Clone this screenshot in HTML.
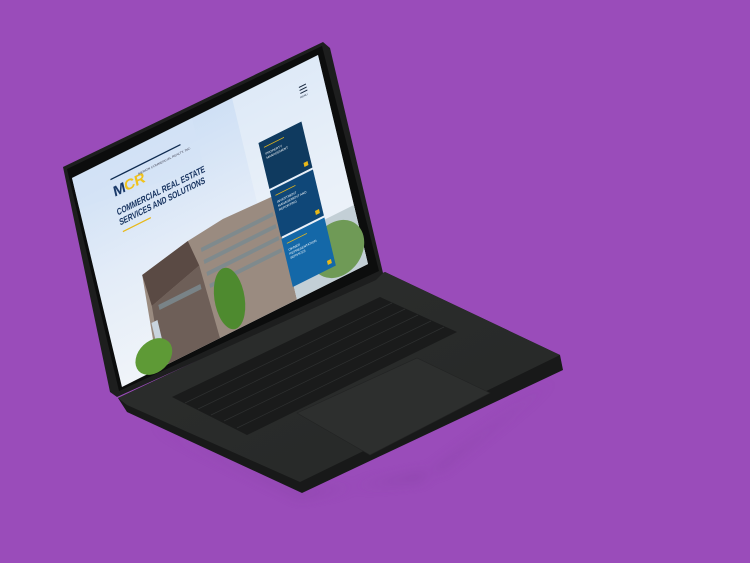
<!DOCTYPE html>
<html><head><meta charset="utf-8"><style>
html,body{margin:0;padding:0;background:#9a4cba;}
svg{display:block}
text{font-family:"Liberation Sans",sans-serif}
</style></head><body>
<svg width="750" height="563" viewBox="0 0 750 563">
<defs>
<linearGradient id="sky" x1="0" y1="0" x2="0" y2="1">
<stop offset="0" stop-color="#cfe0f5"/><stop offset="0.5" stop-color="#e3ecf8"/><stop offset="1" stop-color="#f0f4f9"/>
</linearGradient>
<linearGradient id="base" x1="0" y1="0" x2="1" y2="1">
<stop offset="0" stop-color="#2c2e2d"/><stop offset="1" stop-color="#262827"/>
</linearGradient>
<filter id="bl"><feGaussianBlur stdDeviation="6"/></filter>
</defs>
<rect width="750" height="563" fill="#9a4cba"/>
<!-- shadow -->
<polygon points="150,425 300,497 440,470 555,380 420,480 300,492" fill="#7a3a96" opacity="0.5" filter="url(#bl)"/>
<!-- base -->
<polygon points="118,398 385,272 560,355 563,370 302,493 127,412" fill="#181919"/>
<polygon points="118,398 385,272 560,355 300,482 127,405" fill="url(#base)"/>
<!-- keyboard -->
<polygon points="172,397 380,297 457,332 247,435" fill="#1a1b1b"/>
<g stroke="#2e3030" stroke-width="0.7">
<line x1="185" y1="403" x2="392" y2="303"/><line x1="198" y1="409" x2="405" y2="309"/><line x1="211" y1="415" x2="418" y2="315"/><line x1="224" y1="421" x2="431" y2="321"/><line x1="237" y1="428" x2="444" y2="327"/>
</g>
<!-- trackpad -->
<polygon points="297,413 417,358 490,393 370,455" fill="#2d2f2e" stroke="#232424" stroke-width="0.6"/>
<!-- lid -->
<polygon points="63,167 323,42 330,48 383,273 376,280 117,397 110,392" fill="#1d1e1e"/>
<polygon points="67,169 322,46 379,271 119,391" fill="#0c0d0d"/>
<!-- screen content -->
<g transform="matrix(1,-0.5,0.239,1,72,178)">
<rect x="0" y="0" width="246" height="209" fill="url(#sky)"/>
<polygon points="0,0 120,0 120,50 0,30" fill="#d3e3f6" opacity="0.6"/>
<rect x="160" y="0" width="86" height="209" fill="#eef3fa" opacity="0.5"/>
<!-- logo -->
<text x="34" y="36" font-size="14" font-weight="bold" fill="#1a3a6a">M</text>
<text x="45" y="36" font-size="14" font-weight="bold" fill="#f0c21c">CR</text>
<rect x="34" y="18" width="70" height="1.3" fill="#0e2a50"/>
<text x="60" y="27" font-size="3" fill="#445">MERION COMMERCIAL REALTY, INC.</text>
<g transform="scale(0.7,1)"><text x="47" y="54" font-size="9" fill="#15315e" font-weight="bold">COMMERCIAL REAL ESTATE</text>
<text x="47" y="64" font-size="9" fill="#15315e" font-weight="bold">SERVICES AND SOLUTIONS</text></g>
<rect x="34" y="70" width="28" height="1.2" fill="#e8b818"/>
<!-- building -->
<polygon points="42,118 90,108 126,104 175,106 175,209 36,209" fill="#9a8b80"/>
<polygon points="42,118 90,108 95,135 44,150" fill="#5a4a44"/>
<polygon points="44,150 95,135 98,209 40,209" fill="#6e5f58"/>
<g fill="#7b8a90" opacity="0.85"><rect x="100" y="120" width="72" height="4"/><rect x="100" y="132" width="72" height="4"/><rect x="100" y="144" width="72" height="4"/><rect x="100" y="156" width="72" height="4"/><rect x="50" y="152" width="42" height="5"/></g>
<rect x="40" y="165" width="6" height="44" fill="#c9d4de"/>
<ellipse cx="115" cy="178" rx="14" ry="30" fill="#4e8a2f"/>
<ellipse cx="35" cy="196" rx="18" ry="16" fill="#5e9a36"/>
<rect x="175" y="150" width="71" height="59" fill="#c3cfd6"/>
<ellipse cx="222" cy="182" rx="26" ry="26" fill="#6f9a56"/>
<!-- panels -->
<rect x="174" y="52" width="43" height="46" fill="#0f3a5f"/>
<rect x="174" y="100" width="43" height="46" fill="#0f4778"/>
<rect x="174" y="148" width="43" height="48" fill="#1468a8"/>
<g fill="#e8b818"><rect x="178" y="58" width="20" height="0.8"/><rect x="178" y="106" width="20" height="0.8"/><rect x="178" y="154" width="20" height="0.8"/>
<rect x="210" y="90" width="4" height="4"/><rect x="210" y="138" width="4" height="4"/><rect x="210" y="188" width="4" height="4"/></g>
<g fill="#fff" font-size="3"><text x="178" y="66">PROPERTY</text><text x="178" y="70">MANAGEMENT</text>
<text x="178" y="114">INVESTMENT</text><text x="178" y="118">MANAGEMENT AND</text><text x="178" y="122">REPORTING</text>
<text x="178" y="162">OWNER</text><text x="178" y="166">REPRESENTATION</text><text x="178" y="170">SERVICES</text></g>
<!-- menu -->
<g fill="#1a2a40"><rect x="222" y="20" width="7" height="1"/><rect x="222" y="23" width="7" height="1"/><rect x="222" y="26" width="7" height="1"/></g>
<text x="221" y="31" font-size="2.5" fill="#1a2a40">MENU</text>
</g>
</svg>
</body></html>
